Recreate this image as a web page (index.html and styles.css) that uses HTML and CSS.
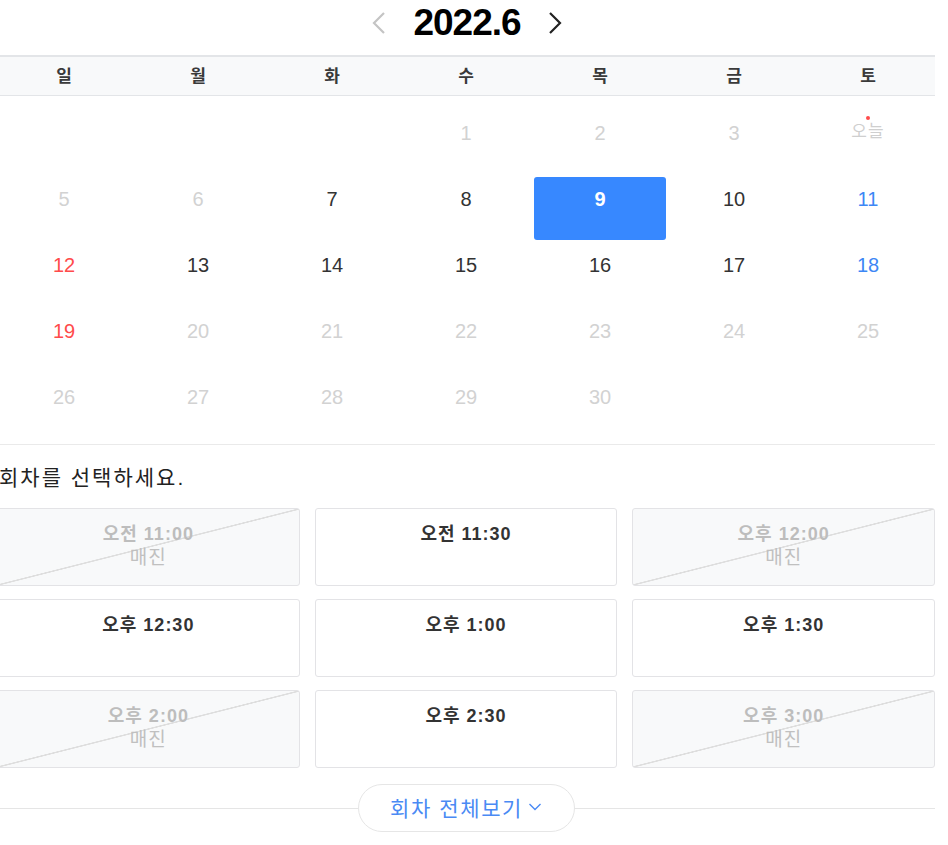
FILE: index.html
```html
<!DOCTYPE html>
<html lang="ko">
<head>
<meta charset="utf-8">
<title>2022.6</title>
<link rel="stylesheet" href="styles.css">
</head>
<body>
<div class="page">
  <div class="month-nav">
    <button class="nav-btn prev" aria-label="이전 달">
      <svg width="16" height="24" viewBox="0 0 16 24"><polyline points="13,2 3,12 13,22" fill="none" stroke="#c4c4c4" stroke-width="2.2"/></svg>
    </button>
    <h1 class="month-title">2022.6</h1>
    <button class="nav-btn next" aria-label="다음 달">
      <svg width="16" height="24" viewBox="0 0 16 24"><polyline points="3,2 13,12 3,22" fill="none" stroke="#222" stroke-width="2.2"/></svg>
    </button>
  </div>

  <div class="weekdays">
    <div>일</div><div>월</div><div>화</div><div>수</div><div>목</div><div>금</div><div>토</div>
  </div>

  <div class="days">
    <div class="day"></div><div class="day"></div><div class="day"></div>
    <div class="day off">1</div><div class="day off">2</div><div class="day off">3</div>
    <div class="day today"><span class="dot"></span>오늘</div>

    <div class="day off">5</div><div class="day off">6</div>
    <div class="day">7</div><div class="day">8</div>
    <div class="day selected">9</div><div class="day">10</div><div class="day sat">11</div>

    <div class="day sun">12</div><div class="day">13</div><div class="day">14</div><div class="day">15</div>
    <div class="day">16</div><div class="day">17</div><div class="day sat">18</div>

    <div class="day sun">19</div><div class="day off">20</div><div class="day off">21</div><div class="day off">22</div>
    <div class="day off">23</div><div class="day off">24</div><div class="day off">25</div>

    <div class="day off">26</div><div class="day off">27</div><div class="day off">28</div><div class="day off">29</div>
    <div class="day off">30</div><div class="day"></div><div class="day"></div>
  </div>

  <div class="sessions">
    <p class="sessions-label">회차를 선택하세요.</p>
    <div class="slots">
      <div class="slot soldout"><strong>오전 11:00</strong><span>매진</span></div>
      <div class="slot"><strong>오전 11:30</strong></div>
      <div class="slot soldout"><strong>오후 12:00</strong><span>매진</span></div>
      <div class="slot"><strong>오후 12:30</strong></div>
      <div class="slot"><strong>오후 1:00</strong></div>
      <div class="slot"><strong>오후 1:30</strong></div>
      <div class="slot soldout"><strong>오후 2:00</strong><span>매진</span></div>
      <div class="slot"><strong>오후 2:30</strong></div>
      <div class="slot soldout"><strong>오후 3:00</strong><span>매진</span></div>
    </div>
    <div class="more-row">
      <button class="more-btn"><span class="more-text">회차 전체보기</span>
        <svg width="14" height="10" viewBox="0 0 14 10"><polyline points="1.5,2 7,7.5 12.5,2" fill="none" stroke="#4a8af4" stroke-width="1.4"/></svg>
      </button>
    </div>
  </div>
</div>
</body>
</html>
```

FILE: styles.css
```css
* { box-sizing: border-box; }

html, body {
  margin: 0;
  padding: 0;
  background: #fff;
  overflow: hidden;
}

body {
  font-family: "Liberation Sans", "Noto Sans CJK KR", sans-serif;
  color: #333;
}

.page {
  width: 938px;
  margin-left: -3px;
}

.month-nav {
  height: 55px;
  display: flex;
  align-items: center;
  justify-content: center;
  gap: 26px;
  padding-bottom: 9px;
  padding-left: 2px;
}

.nav-btn {
  background: none;
  border: 0;
  padding: 0;
  display: flex;
  align-items: center;
  cursor: pointer;
}

.month-title {
  margin: 0;
  font-size: 37px;
  font-weight: 700;
  color: #000;
  letter-spacing: -1px;
  line-height: 40px;
}

.weekdays {
  display: grid;
  grid-template-columns: repeat(7, 1fr);
  height: 41px;
  border-top: 2px solid #e3e5e8;
  border-bottom: 1px solid #e3e5e8;
  background: #f8f9fa;
  align-items: center;
  text-align: center;
  font-size: 17px;
  font-weight: 700;
  color: #3a3a3a;
  padding-bottom: 3px;
}

.days {
  display: grid;
  grid-template-columns: repeat(7, 1fr);
  grid-auto-rows: 66px;
  padding: 12px 0 6px;
  border-bottom: 1px solid #eaeaea;
}

.day {
  margin: 3px 1px 0;
  padding-top: 10px;
  text-align: center;
  font-size: 20px;
  line-height: 24px;
  color: #333;
  border-radius: 3px;
  position: relative;
}

.day.off { color: #d2d2d2; }
.day.sun { color: #ff4b4b; }
.day.sat { color: #3d87f5; }

.day.selected {
  background: #3788ff;
  color: #fff;
  font-weight: 700;
}

.day.today {
  font-size: 17px;
  color: #cfcfcf;
  padding-top: 9px;
  letter-spacing: 1px;
}

.dot {
  position: absolute;
  left: 50%;
  top: 5px;
  width: 4px;
  height: 4px;
  margin-left: -2px;
  border-radius: 50%;
  background: #ff4b4b;
}

.sessions-label {
  margin: 19px 0 16px;
  font-size: 21px;
  line-height: 28px;
  letter-spacing: 2px;
  color: #222;
  padding-left: 2px;
}

.slots {
  display: grid;
  grid-template-columns: repeat(3, 1fr);
  grid-auto-rows: 78px;
  column-gap: 15px;
  row-gap: 13px;
}

.slot {
  border: 1px solid #e3e3e6;
  border-radius: 3px;
  background: #fff;
  display: flex;
  flex-direction: column;
  align-items: center;
  padding-top: 14px;
}

.slot strong {
  font-size: 18px;
  line-height: 23px;
  font-weight: 700;
  letter-spacing: 1px;
  color: #333;
}

.slot span {
  font-size: 19px;
  line-height: 24px;
  letter-spacing: 1px;
  color: #c0c0c0;
}

.slot.soldout {
  background-color: #f8f9fa;
  background-image: linear-gradient(to bottom right, transparent calc(50% - 1px), #dedede calc(50% - 0.5px), #dedede calc(50% + 0.5px), transparent calc(50% + 1px));
}

.slot.soldout strong { color: #bdbdbd; }

.more-row {
  margin-top: 16px;
  height: 48px;
  display: flex;
  justify-content: center;
  align-items: center;
  background: linear-gradient(#e5e5e5, #e5e5e5) center / 100% 1px no-repeat;
}

.more-btn {
  width: 217px;
  height: 48px;
  border: 1px solid #e6e6e6;
  border-radius: 24px;
  background: #fff;
  font-family: "Liberation Sans", "Noto Sans CJK KR", sans-serif;
  font-size: 21px;
  color: #4a8af4;
  display: flex;
  align-items: center;
  justify-content: center;
  gap: 5px;
  padding: 0 0 2px 0;
  cursor: pointer;
}

.more-text { letter-spacing: 1.6px; }
```
